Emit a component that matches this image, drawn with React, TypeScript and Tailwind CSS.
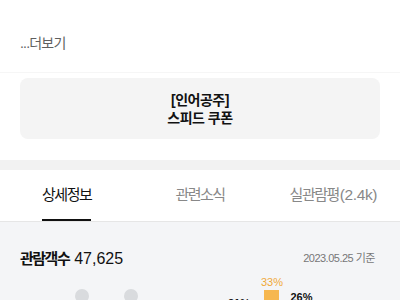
export default function App() {
  const tabs: [string, string][] = [
    ["상세정보", ""],
    ["관련소식", ""],
    ["실관람평", "(2.4k)"],
  ];
  return (
    <div className="w-[400px] h-[300px] overflow-hidden bg-white font-[Liberation_Sans,Noto_Sans_CJK_KR,sans-serif]">
      <div className="h-[73px] border-b border-[#f6f6f6] pl-5 pt-[34px]">
        <div className="text-[14px] leading-[18px] text-[#5f5f5f] tracking-[-0.8px]">...더보기</div>
      </div>
      <div className="px-5 pt-[5px] pb-[21px]">
        <div className="h-[61px] rounded-lg bg-[#f4f4f4] flex flex-col items-center justify-center">
          <div className="text-[14px] leading-[18px] font-bold text-[#111] tracking-[-0.5px]">[인어공주]</div>
          <div className="text-[14px] leading-[18px] font-bold text-[#111] tracking-[-0.5px]">스피드 쿠폰</div>
        </div>
      </div>
      <div className="h-[10px] bg-[#f2f2f2]" />
      <div className="flex h-[52px] border-b border-[#e6e6e6]">
        {tabs.map(([k, n], i) => (
          <div key={k} className="flex-1 flex justify-center">
            <span
              className={
                i === 0
                  ? "h-full flex items-center pt-[1px] border-b-2 border-[#111] text-[#111] text-[15px]"
                  : "h-full flex items-center pt-[1px] border-b-2 border-transparent text-[#888] text-[15px]"
              }
            >
              <span className="tracking-[-1.5px]">{k}</span>
              {n && <span className="text-[15.5px] tracking-[-0.4px] ml-[1px]">{n}</span>}
            </span>
          </div>
        ))}
      </div>
      <div className="bg-[#f4f5f7] h-[100px]">
        <div className="flex items-center justify-between pl-5 pr-[25px] pt-[26px] h-[48px]">
          <div className="text-[15px] leading-[22px] text-[#111]">
            <span className="font-bold tracking-[-1.5px]">관람객수</span>
            <span className="ml-[5px] text-[16px]">47,625</span>
          </div>
          <div className="text-[11px] leading-[16px] text-[#777] tracking-[-0.5px] -mt-[3px]">2023.05.25 기준</div>
        </div>
        <svg width="400" height="40" viewBox="0 0 400 40" className="block">
          <circle cx="82" cy="26" r="7" fill="#d9dbde" />
          <circle cx="131" cy="26" r="7" fill="#d9dbde" />
          <text x="272" y="16" textAnchor="middle" fontSize="11" fill="#f0a93a" fontFamily="Liberation Sans, sans-serif">33%</text>
          <rect x="264" y="20" width="15" height="30" fill="#f6b74f" />
          <text x="301.5" y="31" textAnchor="middle" fontSize="11" fontWeight="bold" fill="#111" fontFamily="Liberation Sans, sans-serif">26%</text>
          <text x="239" y="37" textAnchor="middle" fontSize="11" fontWeight="bold" fill="#111" fontFamily="Liberation Sans, sans-serif">21%</text>
        </svg>
      </div>
    </div>
  );
}
